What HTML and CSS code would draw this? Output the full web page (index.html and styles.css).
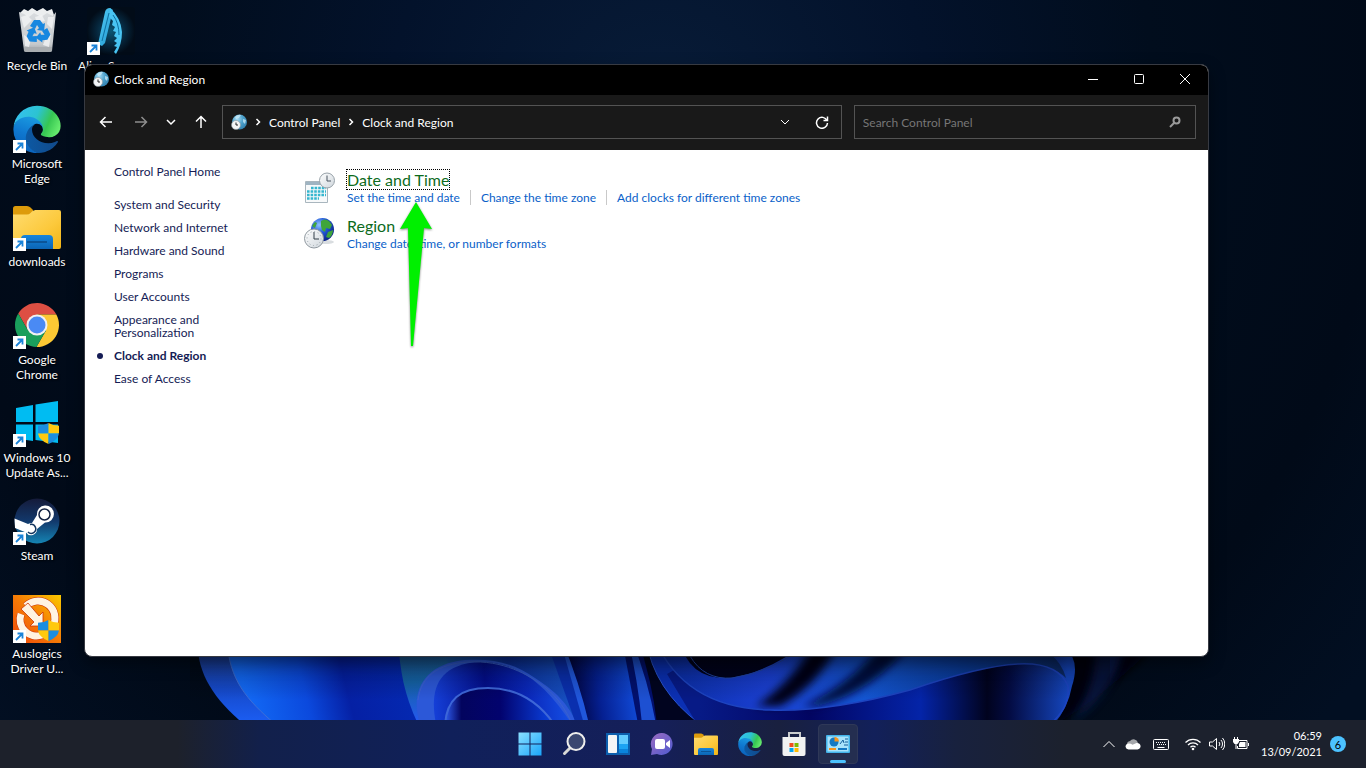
FILE: index.html
```html
<!DOCTYPE html>
<html lang="en">
  <head>
    <meta charset="UTF-8" />
    <meta name="viewport" content="width=device-width, initial-scale=1.0" />
    <title>Clock and Region</title>
    <link rel="stylesheet" href="styles.css">
  </head>
  <body>
    <!-- shared icons -->
    <svg class="sprite" width="0" height="0" aria-hidden="true">
      <defs>
        <linearGradient id="edgeDark" x1="0" y1="0" x2="1" y2="0">
          <stop offset="0" stop-color="#0c59a4" />
          <stop offset="1" stop-color="#114a8b" />
        </linearGradient>
        <linearGradient id="edgeBlue" x1="0.6" y1="0" x2="0.3" y2="1">
          <stop offset="0" stop-color="#1b9de2" />
          <stop offset="0.5" stop-color="#0f78d0" />
          <stop offset="1" stop-color="#0a5fb8" />
        </linearGradient>
        <linearGradient id="edgeGreen" x1="0" y1="0.3" x2="1" y2="0.6">
          <stop offset="0" stop-color="#35c1f1" />
          <stop offset="0.45" stop-color="#2cc3d2" />
          <stop offset="0.75" stop-color="#36c752" />
          <stop offset="1" stop-color="#66eb6e" />
        </linearGradient>
        <linearGradient id="folderFront" x1="0" y1="0" x2="1" y2="1">
          <stop offset="0" stop-color="#ffdc70" />
          <stop offset="0.6" stop-color="#fcc93c" />
          <stop offset="1" stop-color="#f2b415" />
        </linearGradient>
        <linearGradient id="folderBlue" x1="0" y1="0" x2="0" y2="1">
          <stop offset="0" stop-color="#1785dc" />
          <stop offset="1" stop-color="#0b65b5" />
        </linearGradient>
        <radialGradient id="globeBlue" cx="0.35" cy="0.3" r="0.8">
          <stop offset="0" stop-color="#a5dbf3" />
          <stop offset="0.5" stop-color="#4b9fc9" />
          <stop offset="1" stop-color="#2f7dab" />
        </radialGradient>
        <radialGradient id="earthBlue" cx="0.35" cy="0.3" r="0.8">
          <stop offset="0" stop-color="#8fc4ff" />
          <stop offset="0.45" stop-color="#2259d8" />
          <stop offset="1" stop-color="#071a7a" />
        </radialGradient>
        <linearGradient id="clockFace" x1="0" y1="0" x2="1" y2="1">
          <stop offset="0" stop-color="#ffffff" />
          <stop offset="1" stop-color="#cfd6dc" />
        </linearGradient>
        <linearGradient id="startBlue" x1="0" y1="0" x2="1" y2="1">
          <stop offset="0" stop-color="#8be0ff" />
          <stop offset="1" stop-color="#1aa5fb" />
        </linearGradient>
        <linearGradient id="steamBlue" x1="0" y1="0" x2="0" y2="1">
          <stop offset="0" stop-color="#151b3a" />
          <stop offset="0.5" stop-color="#12386b" />
          <stop offset="1" stop-color="#1585b4" />
        </linearGradient>
        <linearGradient id="auslogics" x1="0" y1="1" x2="1" y2="0">
          <stop offset="0" stop-color="#f0470a" />
          <stop offset="0.5" stop-color="#f57a05" />
          <stop offset="1" stop-color="#fbc900" />
        </linearGradient>
        <linearGradient id="chatPurple" x1="0" y1="0" x2="1" y2="1">
          <stop offset="0" stop-color="#9a6bc0" />
          <stop offset="1" stop-color="#4f5bd0" />
        </linearGradient>
        <radialGradient id="alienGlow">
          <stop offset="0" stop-color="#0b5573" />
          <stop offset="0.6" stop-color="#06263c" />
          <stop offset="1" stop-color="#020c18" />
        </radialGradient>
        <linearGradient id="claw" x1="0" y1="0" x2="1" y2="1">
          <stop offset="0" stop-color="#58d0f8" />
          <stop offset="1" stop-color="#1b95cf" />
        </linearGradient>
        <linearGradient id="bin" x1="0" y1="0" x2="0" y2="1">
          <stop offset="0" stop-color="#d9dcdf" />
          <stop offset="0.8" stop-color="#c6cacd" />
          <stop offset="1" stop-color="#9ba0a4" />
        </linearGradient>
      </defs>

      <symbol id="edge" viewBox="0 0 256 260">
        <path fill="url(#edgeDark)" d="M235.68 195.46a93.73 93.73 0 0 1-10.54 4.71 101.87 101.87 0 0 1-35.9 6.46c-47.32 0-88.54-32.55-88.54-74.32A31.48 31.48 0 0 1 117.13 105c-42.8 1.8-53.8 46.4-53.8 72.53 0 73.88 68.09 81.37 82.76 81.37 7.91 0 19.84-2.3 27-4.56l1.31-.44a128.34 128.34 0 0 0 66.6-52.8 4 4 0 0 0-5.32-5.64z" />
        <path fill="url(#edgeBlue)" d="M105.73 246.42A79.2 79.2 0 0 1 83 225.08a80.72 80.72 0 0 1 29.49-120c3.12-1.47 8.45-4.13 15.54-4a32.35 32.35 0 0 1 25.69 13 31.88 31.88 0 0 1 6.36 18.66c0-.21 24.46-79.6-80-79.6-43.9 0-80 41.66-80 78.21a130.15 130.15 0 0 0 12.11 56 128 128 0 0 0 156.38 67.11 75.55 75.55 0 0 1-62.78-8z" />
        <path fill="url(#edgeGreen)" d="M152.33 152.86c-.81 1-3.3 2.5-3.3 5.66 0 2.61 1.7 5.12 4.72 7.23 14.38 10 41.49 8.68 41.56 8.68a59.56 59.56 0 0 0 30.27-8.35A61.38 61.38 0 0 0 256 113.2c.26-22.41-8-37.31-11.34-43.91C223.46 27.84 177.72 4 128 4A128 128 0 0 0 0 130.2C.48 93.66 36.8 64.15 80 64.15c3.5 0 23.46.34 42 10.07 16.34 8.58 24.9 18.94 30.85 29.21 6.18 10.67 7.28 24.15 7.28 29.52s-2.74 13.33-7.8 19.91z" />
      </symbol>

      <symbol id="folder" viewBox="0 0 48 48">
        <path fill="#dd9b0b" d="M0 5.500Q0 3 2.500 3H14q2 0 3.500 1.500L20 7v8H0z" />
        <path fill="url(#folderFront)" d="M0 11.500h14q2 0 3.500-1.500l1.500-1.500Q20.500 7 22.500 7H46q2 0 2 2v35q0 2-2 2H2q-2 0-2-2z" />
        <path fill="url(#folderBlue)" d="M8 46V36q0-4 4-4h24q4 0 4 4v10z" />
        <path stroke="#0a4a87" stroke-width="1.500" d="M14 39h20" />
      </symbol>

      <symbol id="shortcut" viewBox="0 0 13 13">
        <path fill="#fff" d="M0 0h13v13H0z" />
        <path fill="none" stroke="#1a83d8" stroke-width="1.800" d="M3 10l6-6M4.500 3.500H9.500V8.500" />
      </symbol>

      <symbol id="shield" viewBox="0 0 22 22">
        <path fill="#1b8de0" d="M11 0Q6 3 0 3v8h11z" />
        <path fill="#ffc90e" d="M11 0q5 3 11 3v8H11z" />
        <path fill="#ffc90e" d="M0 11h11v11Q1 18 0 11z" />
        <path fill="#1b8de0" d="M22 11H11v11q10-4 11-11z" />
      </symbol>

      <symbol id="globeclock" viewBox="0 0 16 16">
        <circle cx="8.500" cy="8" r="7.500" fill="url(#globeBlue)" />
        <path fill="#d4effa" d="M4 3q3-3 6-2L8 4 5 5zM12 5l3 1-1 4-2-2z" opacity="0.7" />
        <circle cx="5" cy="11" r="4.500" fill="#f4f5f6" stroke="#8c979e" stroke-width="0.600" />
        <path fill="none" stroke="#222" d="M5 8.500V11h2" />
      </symbol>
    </svg>

    <div class="desktop">
      <svg class="wallpaper" viewBox="0 0 1366 768" preserveAspectRatio="xMidYMid slice" aria-hidden="true">
        <defs>
          <radialGradient id="sky" gradientUnits="userSpaceOnUse" cx="660" cy="110" r="900">
            <stop offset="0" stop-color="#081c38" />
            <stop offset="0.3" stop-color="#03122b" />
            <stop offset="0.55" stop-color="#010d1d" />
            <stop offset="0.8" stop-color="#010a18" />
            <stop offset="1" stop-color="#020f22" />
          </radialGradient>
          <linearGradient id="petalA" gradientUnits="userSpaceOnUse" x1="0" y1="656" x2="0" y2="720">
            <stop offset="0" stop-color="#1b409c" />
            <stop offset="0.5" stop-color="#1549c9" />
            <stop offset="1" stop-color="#1b5cf0" />
          </linearGradient>
          <linearGradient id="petalB" gradientUnits="userSpaceOnUse" x1="250" y1="710" x2="410" y2="670">
            <stop offset="0" stop-color="#1268f4" />
            <stop offset="0.35" stop-color="#0b49dd" />
            <stop offset="0.6" stop-color="#0520a4" />
            <stop offset="1" stop-color="#0429b2" />
          </linearGradient>
          <linearGradient id="teal" gradientUnits="userSpaceOnUse" x1="420" y1="656" x2="425" y2="720">
            <stop offset="0" stop-color="#1b5a98" />
            <stop offset="0.4" stop-color="#1463a6" />
            <stop offset="1" stop-color="#2559ee" />
          </linearGradient>
          <linearGradient id="fold" gradientUnits="userSpaceOnUse" x1="440" y1="0" x2="575" y2="0">
            <stop offset="0" stop-color="#1a5da2" />
            <stop offset="0.5" stop-color="#0a2f9c" />
            <stop offset="1" stop-color="#1752c4" />
          </linearGradient>
          <linearGradient id="arch" gradientUnits="userSpaceOnUse" x1="430" y1="700" x2="570" y2="690">
            <stop offset="0" stop-color="#1642dc" />
            <stop offset="0.4" stop-color="#030e8c" />
            <stop offset="0.7" stop-color="#0a28bb" />
            <stop offset="1" stop-color="#1550e6" />
          </linearGradient>
          <linearGradient id="archIn" gradientUnits="userSpaceOnUse" x1="446" y1="0" x2="555" y2="0">
            <stop offset="0" stop-color="#2c57e6" />
            <stop offset="0.14" stop-color="#03045e" />
            <stop offset="0.5" stop-color="#02036e" />
            <stop offset="1" stop-color="#0b45e6" />
          </linearGradient>
          <linearGradient id="streak" gradientUnits="userSpaceOnUse" x1="573" y1="700" x2="640" y2="690">
            <stop offset="0" stop-color="#01043e" />
            <stop offset="0.4" stop-color="#052092" />
            <stop offset="1" stop-color="#124fe0" />
          </linearGradient>
          <linearGradient id="ribbon" gradientUnits="userSpaceOnUse" x1="670" y1="0" x2="1060" y2="0">
            <stop offset="0" stop-color="#0b2ea6" />
            <stop offset="0.25" stop-color="#1a3fd2" />
            <stop offset="0.5" stop-color="#1355d2" />
            <stop offset="0.75" stop-color="#0a3c9c" />
            <stop offset="1" stop-color="#0b2a68" />
          </linearGradient>
          <linearGradient id="under" gradientUnits="userSpaceOnUse" x1="700" y1="0" x2="1068" y2="0">
            <stop offset="0" stop-color="#071a86" />
            <stop offset="0.3" stop-color="#020562" />
            <stop offset="0.6" stop-color="#0424a8" />
            <stop offset="0.78" stop-color="#01031e" />
            <stop offset="0.84" stop-color="#030b42" />
            <stop offset="1" stop-color="#1546bd" />
          </linearGradient>
          <linearGradient id="shade" gradientUnits="userSpaceOnUse" x1="0" y1="652" x2="0" y2="700">
            <stop offset="0" stop-color="#000" stop-opacity="0.300" />
            <stop offset="1" stop-color="#000" stop-opacity="0" />
          </linearGradient>
          <filter id="soft" x="-20%" y="-20%" width="140%" height="140%">
            <feGaussianBlur stdDeviation="4" />
          </filter>
        </defs>
        <path fill="url(#sky)" d="M0 0h1366v768H0z" />
        <path fill="#000208" d="M1050 728q60-35 110-88H900v88z" filter="url(#soft)" />
        <!-- left petals -->
        <path fill="url(#petalA)" d="M198 640c-2 30 14 58 46 84h200v-84z" />
        <path fill="url(#petalB)" d="M227 640c2 40 20 60 48 84h160l-10-84z" />
        <path fill="none" stroke="#3d6fd8" d="M227 640c2 40 20 60 48 84" />
        <path fill="url(#teal)" d="M398 640c2 30 6 55 20 84h180l-40-84z" />
        <path fill="url(#fold)" d="M436 640h120l30 84H480z" />
        <!-- arches -->
        <path fill="#2c58d8" d="M420 724c-10-30 2-60 45-64 30-2 50 4 70 18 25 16 35 30 42 46z" />
        <path fill="url(#arch)" d="M436 724c-6-30-2-60 44-62 45 0 70 30 92 62z" />
        <path fill="url(#archIn)" d="M445 724c2-24 14-36 43-36 32 0 52 16 66 36z" />
        <path fill="none" stroke="#3d66d8" stroke-width="2" d="M445 724c2-24 14-36 43-36 32 0 52 16 66 36" />
        <path fill="none" stroke="#3a62cf" d="M418 700c3-24 20-36 50-38 35-2 60 12 78 26 12 10 20 22 26 36" />
        <!-- middle streaks -->
        <path fill="#0a2fae" d="M546 640l30 84h16l-30-84z" />
        <path fill="#2057dc" d="M560 640l24 84h8l-26-84z" />
        <path fill="url(#streak)" d="M562 640q18 44 27 84h52l-18-84z" />
        <path fill="#02106e" d="M622 640l16 84h60l-48-84z" />
        <path fill="#1d50d2" d="M628 640q10 40 14 84h14q-8-44-24-84z" />
        <path fill="#01041f" d="M638 640q14 40 19 84h50l-40-84z" />
        <path fill="#0b30b4" d="M646 640q8 50 54 84h60l-80-84z" />
        <path fill="none" stroke="#2a55d0" d="M646 640q8 50 54 84" />
        <!-- lower ribbon -->
        <path fill="url(#under)" d="M697 724l-30-50 60-34h300q60 0 45 46-4 22-18 38z" />
        <path fill="url(#ribbon)" d="M655 640q30 68 115 70 60 2 140-20 70-24 108-26 34 0 48 14-8-30-50-38z" />
        <path fill="#000212" d="M756 706q36-24 60-66h24q-20 44-60 66z" filter="url(#soft)" />
        <path fill="#000a3c" d="M802 706q44-18 84-66h28q-40 52-96 66z" filter="url(#soft)" />
        <path fill="#01031c" d="M680 640q8 40 50 38 40-6 80-38z" />
        <path fill="none" stroke="#2146aa" d="M690 656q14 24 42 22 40-6 72-32" />
        <path fill="none" stroke="#1d44c0" stroke-width="1.500" d="M655 640q30 68 115 70 60 2 140-20 70-24 108-26 40-2 50 22 2 22-18 38" />
        <path fill="#08205c" opacity="0.600" d="M1070 724q50-34 54-84h-30q6 40-24 84z" filter="url(#soft)" />
        <path fill="url(#shade)" d="M190 652h920v68H190z" />
      </svg>

      <ul class="icons">
        <li>
          <a href="#">
            <svg viewBox="0 0 48 48">
              <path fill="#eceeef" d="M7 6l4-4 4 2 4-3 5 3 6-3 4 3 5-2 2 6-2 4H9z" />
              <path fill="url(#bin)" d="M6 5l5 39q0 1 2 1h24q2 0 2-1l4-39-3 4-6-3-6 4-7-4-5 4-5-3z" />
              <path fill="#f3f4f5" opacity="0.800" d="M8 10l6-2 5 5-8 8zM22 10l7-2 3 6-8 2zM35 10h6l-2 12-5-5zM11 28l7 4-2 8-4-1zM33 30l5-3-2 13-6-2z" />
              <path fill="#a9adb0" d="M11 40l1 4q0 1 2 1h22q2 0 2-1l1-4z" />
              <g fill="#1787e0">
                <path d="M17 19l4-6h6l3 4 2-1-1 8-7-1 2-2-2-3-2 4z" />
                <path d="M17 19l4-6h6l3 4 2-1-1 8-7-1 2-2-2-3-2 4z" transform="rotate(120 25 25)" />
                <path d="M17 19l4-6h6l3 4 2-1-1 8-7-1 2-2-2-3-2 4z" transform="rotate(240 25 25)" />
              </g>
            </svg>
            <span>Recycle Bin</span>
          </a>
        </li>
        <li>
          <a href="#">
            <svg viewBox="0 0 48 48">
              <use href="#edge" width="48" height="48" />
              <use href="#shortcut" y="35" width="13" height="13" />
            </svg>
            <span>Microsoft<br>Edge</span>
          </a>
        </li>
        <li>
          <a href="#">
            <svg viewBox="0 0 48 48">
              <use href="#folder" width="48" height="48" />
              <use href="#shortcut" y="35" width="13" height="13" />
            </svg>
            <span>downloads</span>
          </a>
        </li>
        <li>
          <a href="#">
            <svg viewBox="0 0 48 48">
              <path fill="#dd4f43" d="M24 13.500H43.330A22 22 0 0 0 5.240 12.510L14.910 29.250 24 24z" />
              <path fill="#fcc934" transform="rotate(120 24 24)" d="M24 13.500H43.330A22 22 0 0 0 5.240 12.510L14.910 29.250 24 24z" />
              <path fill="#1a9f5c" transform="rotate(240 24 24)" d="M24 13.500H43.330A22 22 0 0 0 5.240 12.510L14.910 29.250 24 24z" />
              <circle cx="24" cy="24" r="10.500" fill="#f1f1f1" />
              <circle cx="24" cy="24" r="8.500" fill="#4a8af4" />
              <use href="#shortcut" y="35" width="13" height="13" />
            </svg>
            <span>Google<br>Chrome</span>
          </a>
        </li>
        <li>
          <a href="#">
            <svg viewBox="0 0 48 48">
              <path fill="#00bcf2" d="M3 9l17-3v17H3zM22.500 5.500L45 2v21H22.500zM3 25.500h17v16.500L3 39.500zM22.500 25.500H45V44l-22.500-3z" />
              <use href="#shield" x="25" y="24" width="21" height="21" />
              <use href="#shortcut" y="35" width="13" height="13" />
            </svg>
            <span>Windows 10<br>Update As...</span>
          </a>
        </li>
        <li>
          <a href="#">
            <svg viewBox="0 0 48 48">
              <circle cx="24" cy="24" r="22.500" fill="url(#steamBlue)" />
              <path fill="#fff" d="M1.500 21.500L15 27q2-1 4-1l5-8a8.500 8.500 0 1 1 8 7.500L24 32a6 6 0 0 1-11 3.500L2 31z" />
              <circle cx="31.500" cy="17.500" r="5.500" fill="#fff" stroke="#152445" stroke-width="1.500" />
              <path fill="none" stroke="#14365f" stroke-width="1.500" d="M17 27.500a4.500 4.500 0 1 1-2 7.500" />
              <use href="#shortcut" y="35" width="13" height="13" />
            </svg>
            <span>Steam</span>
          </a>
        </li>
        <li>
          <a href="#">
            <svg viewBox="0 0 48 48">
              <path fill="url(#auslogics)" d="M0 0h48v48H0z" />
              <g fill="none" stroke="#c93208" stroke-width="8">
                <path d="M13 11A17 17 0 0 1 40 31M8 19A16.500 16.500 0 0 0 29 40" />
              </g>
              <g fill="none" stroke="#fff3e2" stroke-width="7">
                <path d="M13 11A17 17 0 0 1 40 31M8 19A16.500 16.500 0 0 0 29 40" />
              </g>
              <path fill="#fff3e2" stroke="#c93208" stroke-width="0.800" d="M8 14l7-6 11 13 4-4v14H17l4-4z" />
              <use href="#shield" x="25" y="25" width="21" height="21" />
              <use href="#shortcut" y="35" width="13" height="13" />
            </svg>
            <span>Auslogics<br>Driver U...</span>
          </a>
        </li>
        <li>
          <a href="#">
            <svg viewBox="0 0 48 48">
              <rect width="48" height="48" rx="3" fill="url(#alienGlow)" />
              <path fill="url(#claw)" d="M11 37L18 5q1-4 5-4l3 2-8 33-3 3z" />
              <path fill="#49c4f2" d="M23 1q11 10 12 24 0 12-6 22l-2-2 3-5-3-1 3-3-3-2 3-3-3-2 2-4-3-1 2-4-3-2 1-4-4-4z" />
              <path fill="none" stroke="#0d6fa0" d="M15 34l7-28M26 8q6 8 6 20" />
              <use href="#shortcut" y="35" width="13" height="13" />
            </svg>
            <span>Alien Swarm</span>
          </a>
        </li>
      </ul>

      <main class="window">
        <header class="titlebar">
          <svg class="icon16"><use href="#globeclock" /></svg>
          <h1>Clock and Region</h1>
          <div class="controls">
            <button aria-label="Minimize"><svg viewBox="0 0 10 10"><path d="M0 5.500h10" /></svg></button>
            <button aria-label="Maximize"><svg viewBox="0 0 10 10"><rect x="0.500" y="0.500" width="9" height="9" rx="1" /></svg></button>
            <button aria-label="Close"><svg viewBox="0 0 10 10"><path d="M0 0l10 10M10 0L0 10" /></svg></button>
          </div>
        </header>

        <div class="toolbar">
          <div class="nav">
            <button aria-label="Back"><svg viewBox="0 0 14 14"><path d="M13 7H1.500M6.500 2l-5 5 5 5" /></svg></button>
            <button aria-label="Forward" disabled><svg viewBox="0 0 14 14"><path d="M1 7h11.500M7.500 2l5 5-5 5" /></svg></button>
            <button class="small" aria-label="Recent locations"><svg viewBox="0 0 14 14"><path d="M3 5l4 4 4-4" /></svg></button>
            <button aria-label="Up"><svg viewBox="0 0 14 14"><path d="M7 13V1.500M2 6.500l5-5 5 5" /></svg></button>
          </div>
          <div class="address">
            <svg class="icon16"><use href="#globeclock" /></svg>
            <svg class="crumb" viewBox="0 0 6 8"><path d="M1.500 1l3 3-3 3" /></svg>
            <a href="#">Control Panel</a>
            <svg class="crumb" viewBox="0 0 6 8"><path d="M1.500 1l3 3-3 3" /></svg>
            <a href="#">Clock and Region</a>
            <div class="address-buttons">
              <button aria-label="Previous locations"><svg class="thin" viewBox="0 0 14 14"><path d="M3 5l4 4 4-4" /></svg></button>
              <button aria-label="Refresh"><svg viewBox="0 0 14 14"><path d="M12 5.500A5.500 5.500 0 1 0 12.500 8M12.500 1.500V5.500H8.500" /></svg></button>
            </div>
          </div>
          <div class="search">
            <input type="search" aria-label="Search Control Panel" placeholder="Search Control Panel" />
            <svg viewBox="0 0 12 12"><circle cx="7.500" cy="4.500" r="3" /><path d="M5.500 6.500L1 11" /></svg>
          </div>
        </div>

        <div class="content">
          <nav class="sidebar">
            <a class="home" href="#">Control Panel Home</a>
            <ul>
              <li><a href="#">System and Security</a></li>
              <li><a href="#">Network and Internet</a></li>
              <li><a href="#">Hardware and Sound</a></li>
              <li><a href="#">Programs</a></li>
              <li><a href="#">User Accounts</a></li>
              <li><a href="#">Appearance and Personalization</a></li>
              <li class="current"><a href="#">Clock and Region</a></li>
              <li><a href="#">Ease of Access</a></li>
            </ul>
          </nav>

          <div class="categories">
            <section>
              <svg class="category-icon" viewBox="0 0 32 32">
                <path fill="#f7f9fa" stroke="#a9b6be" d="M1.500 9.500h22v21h-22z" />
                <path fill="#9fb4c2" d="M2 10h21v3H2z" />
                <path fill="none" stroke="#35b6cf" stroke-width="2.600" stroke-dasharray="2.600 1" d="M7 16h15M3 19.500h19M3 23h19M3 26.500h12" />
                <circle cx="23" cy="8.500" r="7.500" fill="url(#clockFace)" stroke="#98a2a9" />
                <path fill="none" stroke="#4a5560" d="M23 3.500v5.500h4" />
              </svg>
              <div>
                <h2><a class="focused" href="#">Date and Time</a></h2>
                <ul class="tasks">
                  <li><a href="#">Set the time and date</a></li>
                  <li><a href="#">Change the time zone</a></li>
                  <li><a href="#">Add clocks for different time zones</a></li>
                </ul>
              </div>
            </section>
            <section>
              <svg class="category-icon" viewBox="0 0 32 32">
                <ellipse cx="21" cy="24" rx="9" ry="2" fill="#d9dde0" />
                <circle cx="18.500" cy="11.500" r="11.500" fill="url(#earthBlue)" />
                <path fill="#3fa53a" d="M17 3q4-3 8 0l3 4-2 4-4-1-1 4-3-2-1-4zM24 14l5-2q0 5-4 8l-3-1zM8 8l3-4 2 1-2 5z" />
                <circle cx="10" cy="20.500" r="9.500" fill="url(#clockFace)" stroke="#8f989f" />
                <circle cx="10" cy="20.500" r="7" fill="none" stroke="#9aa4ab" stroke-dasharray="1 2.660" />
                <path fill="none" stroke="#333e48" d="M10 14v7h5" />
              </svg>
              <div>
                <h2><a href="#">Region</a></h2>
                <ul class="tasks">
                  <li><a href="#">Change date, time, or number formats</a></li>
                </ul>
              </div>
            </section>
          </div>

          <svg class="pointer" viewBox="0 0 36 148" aria-hidden="true">
            <path d="M18 1L2 28l8-1 3 118h2l11-118 8 1z" />
          </svg>
        </div>
      </main>
    </div>

    <footer class="taskbar">
      <div class="apps">
        <button aria-label="Start"><svg viewBox="0 0 24 24"><path fill="url(#startBlue)" d="M.5.500h11v11H.5zM12.500.500h11v11h-11zM.5 12.500h11v11H.5zM12.500 12.500h11v11h-11z" /></svg></button>
        <button aria-label="Search"><svg viewBox="0 0 24 24"><path stroke="#d8d8d6" stroke-width="3" stroke-linecap="round" d="M2.500 21.500l6-6" /><circle cx="14" cy="9.500" r="8.500" fill="#3a4770" stroke="#eeeeec" stroke-width="2" /></svg></button>
        <button aria-label="Widgets"><svg viewBox="0 0 24 24"><path fill="#0c5fae" d="M0 1h24v22H0z" /><rect x="2" y="3" width="9" height="18" rx="1" fill="#f4f5f6" /><path fill="#63ccff" d="M13 3h9v9h-9z" /><path fill="#1ca3f3" d="M13 12h9v5h-9z" /><path fill="#0a84dc" d="M13 17h9v4h-9z" /></svg></button>
        <button aria-label="Chat"><svg viewBox="0 0 24 24"><path fill="url(#chatPurple)" d="M12 1a11 11 0 1 1-5 21l-6 1 1-6A11 11 0 0 1 12 1z" /><rect x="5" y="7" width="10" height="10" rx="2" fill="#fff" /><path fill="#fff" d="M16 11l4-3v8l-4-3z" /></svg></button>
        <button aria-label="File Explorer"><svg viewBox="0 0 48 48"><use href="#folder" width="48" height="48" /></svg></button>
        <button aria-label="Microsoft Edge"><svg viewBox="0 0 48 48"><use href="#edge" width="48" height="48" /></svg></button>
        <button aria-label="Microsoft Store"><svg viewBox="0 0 24 24"><path fill="none" stroke="#c9ccce" stroke-width="2" d="M7 6V1h11v5" /><path fill="#f0f1f2" d="M.5 5h23v17q0 2-2 2h-19q-2 0-2-2z" /><path fill="#f04e1f" d="M7.500 11h4v4h-4z" /><path fill="#7fba00" d="M12.500 11h4v4h-4z" /><path fill="#00a4ef" d="M7.500 16h4v4h-4z" /><path fill="#ffb900" d="M12.500 16h4v4h-4z" /></svg></button>
        <button class="active" aria-label="Control Panel"><svg viewBox="0 0 24 24"><rect y="3" width="24" height="18" rx="1" fill="#43b4ea" /><path fill="#a9e3fb" d="M1.500 4.500h21v15h-21z" /><circle cx="8" cy="10" r="4.500" fill="#1479c4" /><path fill="#f7941d" d="M8.500 9.500V5a4.500 4.500 0 0 1 4.500 4.500z" /><path fill="none" stroke="#155f9b" d="M14 12l3-4 1 3M19 7h3M19 10h3M18 13h4" /><path stroke="#f7941d" stroke-width="2" d="M3 17h7" /><path stroke="#1479c4" stroke-width="2" d="M12 17h9" /></svg></button>
      </div>

      <div class="tray">
        <button aria-label="Show hidden icons"><svg viewBox="0 0 16 16"><path d="M2.500 11L8 5.500l5.500 5.500" /></svg></button>
        <button aria-label="OneDrive"><svg viewBox="0 0 16 16"><path class="cloud-back" d="M2 8.500a3.500 3.500 0 0 1 3-3.500 4.500 4.500 0 0 1 8 2l-5 3z" /><path class="cloud" d="M3.500 13.500a3 3 0 0 1-1-5.800q3-.5 5 1l4-1.700a3.300 3.300 0 1 1 1 6.500z" /></svg></button>
        <button class="keyboard" aria-label="Touch keyboard"><svg viewBox="0 0 16 16"><rect x="0.500" y="3.500" width="15" height="10" rx="1" /><path stroke-dasharray="1 1" d="M3 6.500h10M4 8.500h9" /><path d="M4.500 11.500h7" /></svg></button>
        <button class="system" aria-label="Network, volume and battery">
          <svg viewBox="0 0 16 16"><path stroke-width="1.300" d="M.500 6.500a10.500 10.500 0 0 1 15 0M3 9a7 7 0 0 1 10 0M5.500 11.200a3.500 3.500 0 0 1 5 0" /><circle class="solid" cx="8" cy="13" r="1.300" /></svg>
          <svg viewBox="0 0 16 16"><path d="M.5 6h3L7.500 2.500v11L3.500 10h-3zM10 6a3 3 0 0 1 0 4M12 4a6 6 0 0 1 0 8M13.500 2a9 9 0 0 1 0 12" /></svg>
          <svg viewBox="0 0 16 16"><path d="M6 4.500h8v8H4.500V10M15.500 7v3M1.500 1v2.500M4.500 1v2.500M3 7.500V13" /><path class="solid" d="M0 3h6v3L4.500 8h-3L0 6zM7 6h5.500v5H6V8z" /></svg>
        </button>
        <button class="clock"><span>06:59</span><span>13/09/2021</span></button>
        <button class="badge" aria-label="6 notifications">6</button>
      </div>
    </footer>
  </body>
</html>
```
FILE: styles.css
```css
* {
  box-sizing: border-box;
}
body {
  margin: 0;
  min-height: 100vh;
  display: flex;
  flex-direction: column;
  background-color: #010c1b;
  font-family: Lato, "Open Sans", sans-serif;
  font-size: 12px;
  overflow: hidden;
}
h1,
h2,
ul {
  margin: 0;
  padding: 0;
  font-size: 12px;
  font-weight: normal;
  list-style: none;
}
a {
  color: inherit;
  text-decoration: none;
}
button {
  display: flex;
  align-items: center;
  justify-content: center;
  padding: 0;
  border: none;
  background: none;
  color: inherit;
  font: inherit;
}
.sprite {
  position: absolute;
}
.icon16 {
  width: 16px;
  height: 16px;
}

/* desktop */
.desktop {
  position: relative;
  flex: 1;
}
.wallpaper {
  position: absolute;
  top: 0;
  left: 0;
  width: 100%;
  height: 100vh;
}
.icons {
  position: relative;
  display: grid;
  grid-auto-flow: column;
  grid-template-rows: repeat(7, 98px);
  grid-auto-columns: 74px;
  padding-top: 7px;
}
.icons a {
  display: flex;
  flex-direction: column;
  align-items: center;
  gap: 3px;
  color: #fff;
  line-height: 15px;
  text-align: center;
  white-space: nowrap;
  text-shadow: 1px 1px 2px #000;
}
.icons svg {
  width: 48px;
  height: 48px;
}

/* window */
.window {
  position: absolute;
  top: 64px;
  right: 157px;
  bottom: 63px;
  left: 84px;
  display: flex;
  flex-direction: column;
  overflow: hidden;
  border: 1px solid #373a42;
  border-radius: 8px;
  background-color: #fff;
  box-shadow: 0 6px 16px rgba(0, 0, 0, 0.4);
}
.titlebar {
  display: flex;
  align-items: center;
  gap: 5px;
  height: 30px;
  padding: 0 0 2px 8px;
  background-color: #000;
  color: #fff;
}
.controls {
  display: flex;
  align-self: stretch;
  margin-left: auto;
}
.controls button {
  width: 46px;
}
.controls svg {
  width: 10px;
  height: 10px;
  fill: none;
  stroke: #fff;
}
.toolbar {
  display: flex;
  gap: 12px;
  height: 55px;
  padding: 10px 12px 11px 6px;
  background-color: #191919;
  color: #fff;
}
.nav {
  display: flex;
}
.nav button {
  width: 30px;
}
.nav button:nth-child(2) {
  width: 40px;
}
.nav button.small {
  width: 20px;
}
.nav button:last-child {
  width: 39px;
}
.nav svg,
.address-buttons svg {
  width: 14px;
  height: 14px;
  fill: none;
  stroke: #fff;
  stroke-width: 1.5;
}
.address-buttons .thin {
  stroke-width: 1;
}
.nav button:disabled svg {
  stroke: #8d8d8d;
}
.nav + .address {
  margin-left: -10px;
}
.address,
.search {
  display: flex;
  align-items: center;
  border: 1px solid #535353;
}
.address {
  flex: 23 1 0;
  gap: 8px;
  padding-left: 8px;
}
.crumb {
  width: 6px;
  height: 8px;
  fill: none;
  stroke: #fff;
  stroke-width: 1.5;
}
.address-buttons {
  display: flex;
  align-self: stretch;
  margin-left: auto;
}
.address-buttons button {
  width: 37px;
}
.search {
  flex: 12 1 0;
  padding: 0 14px 0 8px;
}
.search input {
  flex: 1;
  padding: 0;
  border: none;
  outline: none;
  background: none;
  color: #fff;
  font: inherit;
}
.search input::placeholder {
  color: #767676;
}
.search svg {
  width: 12px;
  height: 12px;
  fill: none;
  stroke: #9a9a9a;
  stroke-width: 2;
}

.content {
  position: relative;
  flex: 1;
  display: flex;
}
.sidebar {
  width: 219px;
  padding: 15px 60px 0 29px;
  color: #151c55;
  line-height: 13px;
}
.home {
  display: block;
  margin-bottom: 20px;
}
.sidebar ul {
  display: flex;
  flex-direction: column;
  gap: 10px;
}
.sidebar li {
  white-space: nowrap;
}
.sidebar li:nth-child(6) {
  white-space: normal;
}
.sidebar .current {
  position: relative;
  font-weight: bold;
}
.current::before {
  content: "";
  position: absolute;
  top: 4px;
  left: -17px;
  width: 6px;
  height: 6px;
  border-radius: 50%;
  background-color: #151c55;
}
.categories {
  display: flex;
  flex-direction: column;
  gap: 10px;
  padding-top: 20px;
}
.categories section {
  display: flex;
  gap: 11px;
}
.category-icon {
  width: 32px;
  height: 32px;
  margin-top: 2px;
}
h2 {
  font-size: 16px;
  line-height: 20px;
  color: #0d6b1c;
}
.focused {
  outline: 1px dotted #000;
}
.tasks {
  display: flex;
  color: #0a5fc9;
  line-height: 16px;
}
.tasks li + li::before {
  content: "";
  margin: 0 10px;
  border-left: 1px solid #c9c9c9;
}
.pointer {
  position: absolute;
  top: 51px;
  left: 313px;
  width: 36px;
  height: 148px;
  fill: #00f000;
  filter: drop-shadow(0 1px 1px rgba(0, 0, 0, 0.5));
}

/* taskbar */
.taskbar {
  position: relative;
  display: grid;
  grid-template-columns: 1fr auto 1fr;
  align-items: center;
  height: 48px;
  padding-left: 2px;
  background: linear-gradient(90deg, #1d212b 13%, #12204b 19%, #10205a 33%, #151f59 48%, #19203f 57%, #12205a 64%, #18213e 70%, #1c212d 78%);
  color: #fff;
}
.apps {
  grid-column: 2;
  display: flex;
  gap: 4px;
}
.apps button {
  position: relative;
  width: 40px;
  height: 40px;
  border: 1px solid transparent;
  border-radius: 4px;
}
.apps svg {
  width: 24px;
  height: 24px;
  fill: none;
}
.apps .active {
  border-color: #2f3858;
  background-color: #242e50;
}
.active::after {
  content: "";
  position: absolute;
  bottom: 0;
  left: 11px;
  width: 16px;
  height: 3px;
  border-radius: 2px;
  background-color: #4cc2ff;
}
.tray {
  display: flex;
  align-items: center;
  justify-content: flex-end;
  gap: 8px;
  padding-right: 20px;
}
.tray svg {
  width: 16px;
  height: 16px;
  fill: none;
  stroke: #fff;
}
.tray .cloud,
.tray .solid {
  fill: #fff;
  stroke: none;
}
.tray .cloud-back {
  fill: #a5a7ab;
  stroke: none;
}
.keyboard {
  padding: 0 8px 0 4px;
}
.system {
  gap: 8px;
}
.clock {
  flex-direction: column;
  align-items: flex-end;
  padding-left: 4px;
  font-size: 11px;
  line-height: 16px;
}
.badge {
  width: 16px;
  height: 16px;
  border-radius: 50%;
  background-color: #4cc2ff;
  color: #000;
  font-size: 11px;
}
```
